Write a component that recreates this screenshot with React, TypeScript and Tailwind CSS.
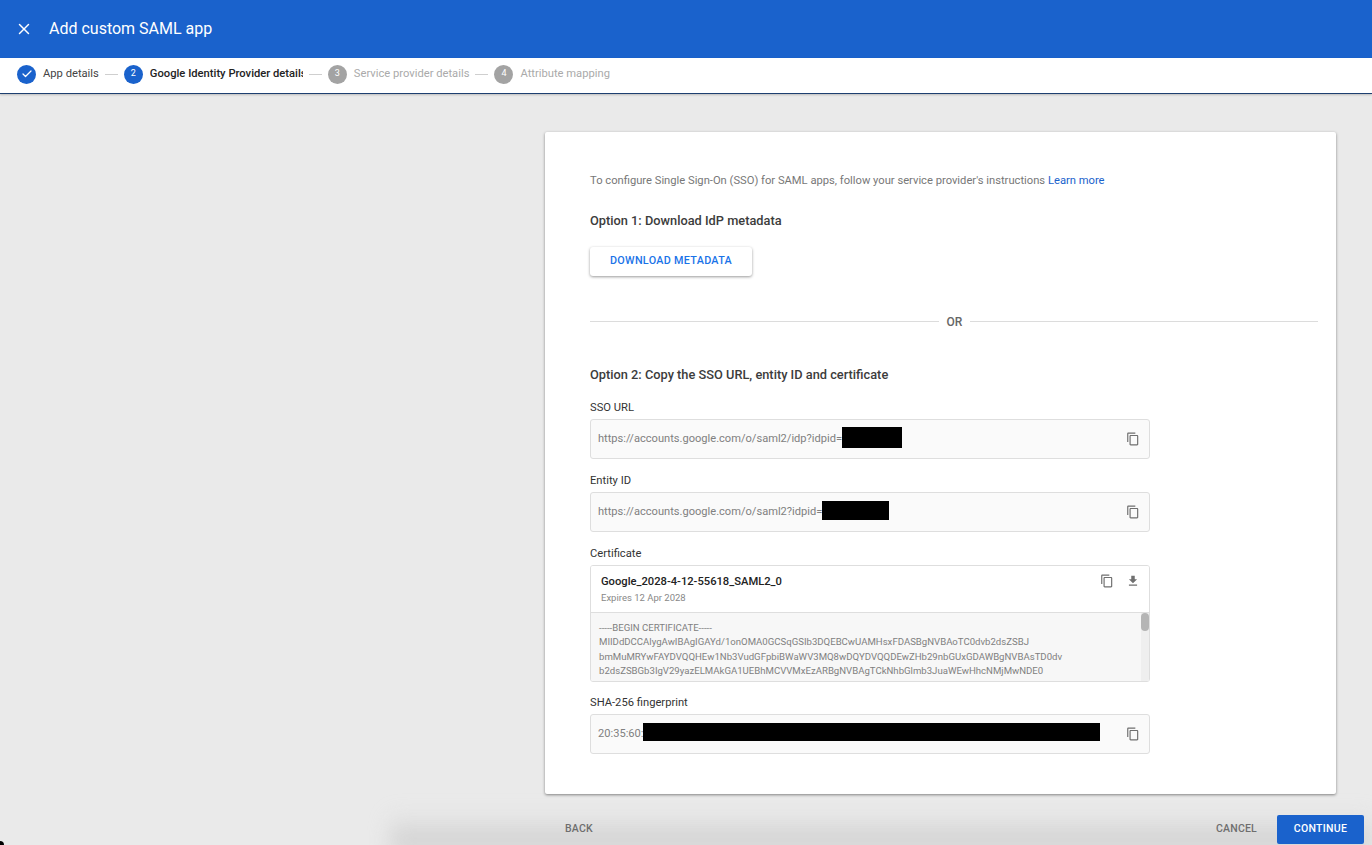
import { Check, X } from "lucide-react"

const STEPS = [
  { n: "2", label: "Google Identity Provider details", state: "active" },
  { n: "3", label: "Service provider details", state: "idle" },
  { n: "4", label: "Attribute mapping", state: "idle" },
]

const CERT_LINES = [
  "-----BEGIN CERTIFICATE-----",
  "MIIDdDCCAlygAwIBAgIGAYd/1onOMA0GCSqGSIb3DQEBCwUAMHsxFDASBgNVBAoTC0dvb2dsZSBJ",
  "bmMuMRYwFAYDVQQHEw1Nb3VudGFpbiBWaWV3MQ8wDQYDVQQDEwZHb29nbGUxGDAWBgNVBAsTD0dv",
  "b2dsZSBGb3IgV29yazELMAkGA1UEBhMCVVMxEzARBgNVBAgTCkNhbGlmb3JuaWEwHhcNMjMwNDE0",
]

function CopyIcon({ className = "" }: { className?: string }) {
  return (
    <svg viewBox="0 0 24 24" className={`h-[14px] w-[14px] fill-[#6f6f6f] ${className}`}>
      <path d="M16 1H4c-1.1 0-2 .9-2 2v14h2V3h12V1zm3 4H8c-1.1 0-2 .9-2 2v14c0 1.1.9 2 2 2h11c1.1 0 2-.9 2-2V7c0-1.1-.9-2-2-2zm0 16H8V7h11v14z" />
    </svg>
  )
}

function Field({ label, value, hidden }: { label: string; value: string; hidden: string }) {
  return (
    <div>
      <div className="h-[14px] text-[11.2px] leading-[16px] text-[#333]">{label}</div>
      <div className="mt-[5px] flex h-[40px] items-center rounded-[3px] border border-[#dedede] bg-[#fafafa] pl-[7px] pr-[9px]">
        <span className="pt-[1px] text-[11.1px] text-[#808080]">{value}</span>
        <span className={`-mt-[4px] bg-black ${hidden}`} />
        <CopyIcon className="ml-auto" />
      </div>
    </div>
  )
}

export default function App() {
  return (
    <div className="relative flex h-[845px] w-[1372px] flex-col overflow-hidden bg-[#eaeaea] font-['Roboto',sans-serif]">
      <header className="flex h-[58px] items-center bg-[#1a62cc] pl-[15px] text-white">
        <X className="h-[18px] w-[18px]" strokeWidth={2} />
        <h1 className="ml-[16px] text-[16px]">Add custom SAML app</h1>
      </header>

      <nav className="flex h-[36px] items-center border-b border-[#1d3f70] bg-white pb-[3px] pl-[17px] shadow-[0_1px_2px_rgba(0,0,0,0.2)]">
        <span className="flex h-[19px] w-[19px] items-center justify-center rounded-full bg-[#1a62cc] text-white">
          <Check className="h-[12px] w-[12px]" strokeWidth={2.5} />
        </span>
        <span className="ml-[7px] text-[11.2px] text-[#444]">App details</span>
        {STEPS.map((step) => (
          <div key={step.n} className="flex items-center">
            <span className="mx-[6px] h-px w-[13px] bg-[#cfcfcf]" />
            <span
              className={
                step.state === "active"
                  ? "flex h-[19px] w-[19px] items-center justify-center rounded-full bg-[#1a62cc] text-[9px] text-white"
                  : "flex h-[19px] w-[19px] items-center justify-center rounded-full bg-[#a3a3a3] text-[9px] text-white"
              }
            >
              {step.n}
            </span>
            <span
              className={
                step.state === "active"
                  ? "ml-[7px] w-[153px] overflow-hidden whitespace-nowrap text-[11.2px] font-medium text-[#222]"
                  : "ml-[7px] whitespace-nowrap text-[11.2px] text-[#aaa]"
              }
            >
              {step.label}
            </span>
          </div>
        ))}
      </nav>

      <main className="pl-[545px] pr-[36px] pt-[38px]">
        <section className="h-[662px] rounded-[2px] bg-white pl-[45px] pr-[18px] pt-[42px] shadow-[0_1px_3px_rgba(0,0,0,0.45)]">
          <p className="h-[14px] text-[11.2px] leading-[14px] text-[#777]">
            To configure Single Sign-On (SSO) for SAML apps, follow your service provider's instructions{" "}
            <span className="text-[#1a62cc]">Learn more</span>
          </p>
          <h2 className="mt-[25px] h-[16px] text-[12.8px] font-medium leading-[16px] text-[#3c3c3c]">
            Option 1: Download IdP metadata
          </h2>
          <button className="mt-[18px] block h-[29px] w-[162px] rounded-[3px] bg-white text-[10.8px] font-medium tracking-[0.3px] text-[#1a73e8] shadow-[0_1px_3px_rgba(0,0,0,0.4)]">
            DOWNLOAD METADATA
          </button>
          <div className="mt-[38px] flex h-[14px] items-center">
            <span className="h-px w-[349px] bg-[#dcdcdc]" />
            <span className="w-[31px] pt-[1px] text-center text-[12px] font-medium text-[#666]">OR</span>
            <span className="h-px flex-1 bg-[#dcdcdc]" />
          </div>
          <h2 className="mt-[39px] h-[16px] text-[12.8px] font-medium leading-[16px] text-[#3c3c3c]">
            Option 2: Copy the SSO URL, entity ID and certificate
          </h2>

          <div className="mt-[17px] w-[560px]">
            <Field label="SSO URL" value="https://accounts.google.com/o/saml2/idp?idpid=" hidden="h-[21px] w-[60px]" />
            <div className="mt-[14px]">
              <Field label="Entity ID" value="https://accounts.google.com/o/saml2?idpid=" hidden="h-[19px] w-[67px]" />
            </div>

            <div className="mt-[14px] h-[14px] text-[11.2px] leading-[16px] text-[#333]">Certificate</div>
            <div className="mt-[5px] h-[117px] overflow-hidden rounded-[3px] border border-[#dedede]">
              <div className="flex h-[47px] border-b border-[#dedede] bg-white pl-[10px] pr-[9px] pt-[9px]">
                <div>
                  <div className="text-[11.2px] font-medium leading-[14px] text-[#222]">Google_2028-4-12-55618_SAML2_0</div>
                  <div className="mt-[3px] text-[9.5px] leading-[12px] text-[#888]">Expires 12 Apr 2028</div>
                </div>
                <div className="-mt-[1px] ml-auto flex h-[14px] items-center gap-[12px]">
                  <CopyIcon />
                  <svg viewBox="0 0 24 24" className="h-[14px] w-[14px] fill-[#6f6f6f]">
                    <path d="M19 9h-4V3H9v6H5l7 7 7-7zM5 18v2h14v-2H5z" />
                  </svg>
                </div>
              </div>
              <div className="flex h-[69px] bg-[#f7f7f7]">
                <div className="flex-1 overflow-hidden pl-[8px] pt-[7.5px]">
                  {CERT_LINES.map((line) => (
                    <div key={line} className="whitespace-nowrap text-[9.6px] leading-[14.5px] text-[#808080]">
                      {line}
                    </div>
                  ))}
                </div>
                <div className="w-[8px] bg-[#efefef]">
                  <div className="h-[18px] rounded-[4px] bg-[#b5b5b5]" />
                </div>
              </div>
            </div>

            <div className="mt-[13px]">
              <Field label="SHA-256 fingerprint" value="20:35:60:" hidden="h-[18px] w-[457px]" />
            </div>
          </div>
        </section>
      </main>

      <div className="absolute -bottom-[6px] left-[390px] right-0 h-[40px] bg-gradient-to-b from-transparent to-[#cbcbcb] blur-[10px]" />

      <footer className="relative mt-[20px] flex h-[30px] items-center pl-[565px] pr-[8px]">
        <span className="text-[10.5px] font-medium tracking-[0.2px] text-[#6e6e6e]">BACK</span>
        <span className="ml-auto text-[10.5px] font-medium tracking-[0.2px] text-[#6e6e6e]">CANCEL</span>
        <button className="ml-[20px] h-[29px] w-[87px] rounded-[2px] bg-[#1a62cc] text-[10.5px] font-medium tracking-[0.3px] text-white">
          CONTINUE
        </button>
      </footer>

      <div className="absolute -bottom-[4px] -left-[4px] h-[8px] w-[8px] rounded-full bg-black" />
    </div>
  )
}
